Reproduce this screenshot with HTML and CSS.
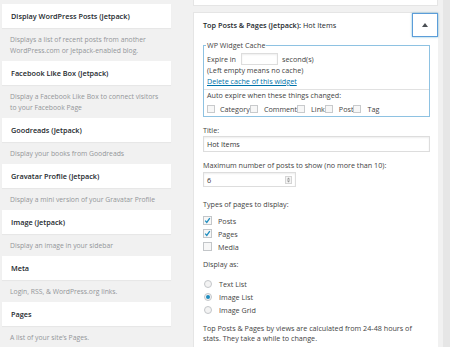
FILE: index.html
```html
<!DOCTYPE html>
<html lang="en">
<head>
    <meta charset="UTF-8">
    <title>Widgets</title>
    <link rel="stylesheet" href="styles.css">
</head>
<body>
<div class="page">

    <!-- Available widgets -->
    <div class="available">
        <div class="widget">
            <div class="widget-title">Display WordPress Posts (Jetpack)</div>
            <p class="desc">Displays a list of recent posts from another<br>WordPress.com or Jetpack-enabled blog.</p>
        </div>
        <div class="widget">
            <div class="widget-title">Facebook Like Box (Jetpack)</div>
            <p class="desc">Display a Facebook Like Box to connect visitors<br>to your Facebook Page</p>
        </div>
        <div class="widget">
            <div class="widget-title">Goodreads (Jetpack)</div>
            <p class="desc">Display your books from Goodreads</p>
        </div>
        <div class="widget">
            <div class="widget-title">Gravatar Profile (Jetpack)</div>
            <p class="desc">Display a mini version of your Gravatar Profile</p>
        </div>
        <div class="widget">
            <div class="widget-title">Image (Jetpack)</div>
            <p class="desc">Display an image in your sidebar</p>
        </div>
        <div class="widget">
            <div class="widget-title">Meta</div>
            <p class="desc">Login, RSS, &amp; WordPress.org links.</p>
        </div>
        <div class="widget">
            <div class="widget-title">Pages</div>
            <p class="desc">A list of your site&#8217;s Pages.</p>
        </div>
    </div>

    <!-- Sidebar -->
    <div class="sidebar">
        <div class="prev-widget"></div>
        <div class="open-widget">
            <div class="open-head">
                <span class="head-title"><b>Top Posts &amp; Pages (Jetpack):</b> Hot Items</span>
                <span class="toggle">
                    <svg width="6" height="4" viewBox="0 0 6 4"><path d="M3 0 L6 4 L0 4 Z" fill="#4a4f54"/></svg>
                </span>
            </div>
            <div class="inside">
                <fieldset class="cache">
                    <legend>WP Widget Cache</legend>
                    <div class="expire-row">Expire in <span class="small-input"></span> second(s)</div>
                    <div class="line">(Left empty means no cache)</div>
                    <div class="line"><a href="#">Delete cache of this widget</a></div>
                    <div class="sep"></div>
                    <div class="line">Auto expire when these things changed:</div>
                    <div class="cb-row">
                        <span class="cb first"></span>Category<span class="cb"></span>Comment<span class="cb"></span>Link<span class="cb"></span>Post<span class="cb"></span>Tag
                    </div>
                </fieldset>

                <p class="label title-label">Title:</p>
                <div class="text-input">Hot Items</div>

                <p class="label max-label">Maximum number of posts to show (no more than 10):</p>
                <div class="num-input">6
                    <svg class="spin" width="7" height="8" viewBox="0 0 7 8">
                        <rect x="0.5" y="0.5" width="6" height="7" fill="#f4f4f4" stroke="#d5d5d5"/>
                        <path d="M3.5 1.6 L5.2 3.4 L1.8 3.4 Z" fill="#9a9a9a"/>
                        <path d="M3.5 6.4 L5.2 4.6 L1.8 4.6 Z" fill="#9a9a9a"/>
                    </svg>
                </div>

                <p class="label types-label">Types of pages to display:</p>
                <div class="opt"><span class="box checked"><svg width="7" height="7" viewBox="0 0 7 7"><path d="M1.2 3.6 L2.8 5.4 L5.8 1.2" fill="none" stroke="#1e8cbe" stroke-width="1.3"/></svg></span>Posts</div>
                <div class="opt"><span class="box checked"><svg width="7" height="7" viewBox="0 0 7 7"><path d="M1.2 3.6 L2.8 5.4 L5.8 1.2" fill="none" stroke="#1e8cbe" stroke-width="1.3"/></svg></span>Pages</div>
                <div class="opt"><span class="box"></span>Media</div>

                <p class="label display-label">Display as:</p>
                <div class="opt"><span class="radio"></span>Text List</div>
                <div class="opt"><span class="radio on"></span>Image List</div>
                <div class="opt"><span class="radio"></span>Image Grid</div>

                <p class="note">Top Posts &amp; Pages by views are calculated from 24-48 hours of<br>stats. They take a while to change.</p>
            </div>
        </div>
    </div>

    <div class="edge"></div>
</div>
</body>
</html>
```

FILE: styles.css
```css
/* General */
body {
    margin: 0;
    height: 347px;
    overflow: hidden;
    background-color: #f1f1f1;
    font-family: 'Open Sans', 'Liberation Sans', sans-serif;
    font-size: 7.2px;
    color: #444;
}

.page {
    display: flex;
    align-items: flex-start;
}

/* Available widgets */
.available {
    width: 169px;
    margin-left: 2px;
    padding-top: 4px;
}

.widget-title {
    height: 24px;
    line-height: 24px;
    padding-left: 9px;
    background: white;
    color: #23282d;
    font-weight: 600;
    font-size: 7.3px;
    box-shadow: 0 1px 1px rgba(0, 0, 0, 0.04);
}

.desc {
    margin: 0;
    padding: 6px 8px 5px;
    line-height: 11px;
    font-size: 6.8px;
    color: #939699;
    white-space: nowrap;
}

/* Sidebar */
.sidebar {
    width: 245px;
    margin-left: 22px;
}

.prev-widget {
    height: 5px;
    background: white;
    border: 1px solid #e5e5e5;
    border-top: none;
    margin-bottom: 6px;
}

.open-widget {
    height: 334px;
    background: white;
    border: 1px solid #e5e5e5;
    border-right: none;
    border-bottom: none;
}

.open-head {
    display: flex;
    align-items: center;
    height: 24px;
}

.head-title {
    flex: 1;
    padding-left: 9px;
    color: #23282d;
    font-size: 7.3px;
}

.head-title b {
    font-weight: 600;
}

.toggle {
    display: flex;
    align-items: center;
    justify-content: center;
    width: 24px;
    height: 22px;
    border: 1px solid #5b9dd9;
    box-shadow: 0 0 2px rgba(30, 140, 190, 0.6);
}

.inside {
    padding: 3px 8px 0 9px;
}

/* Cache fieldset */
.cache {
    margin: 0;
    padding: 0 3px 1px;
    border: 1px solid #8ec2e2;
}

.cache legend {
    padding: 0 1px;
    margin-left: -1px;
    line-height: 10px;
}

.expire-row {
    display: flex;
    align-items: center;
    height: 13px;
    margin-top: 2px;
}

.small-input {
    display: inline-block;
    width: 35px;
    height: 10px;
    margin: 0 4px 0 5px;
    border: 1px solid #ddd;
    box-shadow: inset 0 1px 2px rgba(0, 0, 0, 0.07);
}

.line {
    line-height: 11px;
}

.line a {
    color: #0073aa;
}

.sep {
    margin: 2px -3px 0;
    border-top: 1px solid #e1e1e1;
}

.cb-row {
    display: flex;
    align-items: center;
    height: 13px;
    margin-top: 1px;
}

.cb {
    display: inline-block;
    width: 6px;
    height: 6px;
    margin: 0 6px 0 0;
    border: 1px solid #c8cacc;
    background: #f7f7f7;
}

.cb.first {
    margin-right: 5px;
}

/* Fields */
.label {
    margin: 0;
    line-height: 11px;
}

.title-label { margin-top: 8px; }
.max-label { margin-top: 8px; }
.types-label { margin-top: 12px; }
.display-label { margin-top: 6px; }

.text-input {
    height: 14px;
    line-height: 14px;
    padding-left: 3px;
    border: 1px solid #ddd;
    box-shadow: inset 0 1px 2px rgba(0, 0, 0, 0.07);
    color: #333;
}

.num-input {
    display: flex;
    align-items: center;
    justify-content: space-between;
    width: 85px;
    height: 13px;
    margin-top: 1px;
    padding: 0 3px;
    border: 1px solid #ddd;
    box-shadow: inset 0 1px 2px rgba(0, 0, 0, 0.07);
    color: #333;
}

.types-label + .opt { margin-top: 4px; }
.display-label + .opt { margin-top: 7px; }

.opt {
    display: flex;
    align-items: center;
    height: 13px;
}

.box {
    display: flex;
    align-items: center;
    justify-content: center;
    width: 7px;
    height: 7px;
    margin-right: 6px;
    border: 1px solid #c3c6c9;
    background: #f7f7f7;
}

.radio {
    display: flex;
    align-items: center;
    justify-content: center;
    width: 6px;
    height: 6px;
    margin: 0 7px 0 1px;
    border: 1px solid #c3c6c9;
    border-radius: 50%;
    background: #f3f3f3;
}

.radio.on::after {
    content: "";
    width: 4px;
    height: 4px;
    border-radius: 50%;
    background: #1e8cbe;
}

.note {
    margin: 7px 0 0;
    line-height: 10px;
    white-space: nowrap;
}

/* Right edge */
.edge {
    width: 7px;
    height: 347px;
    margin-left: auto;
    background: #e6e6e6;
}
```
